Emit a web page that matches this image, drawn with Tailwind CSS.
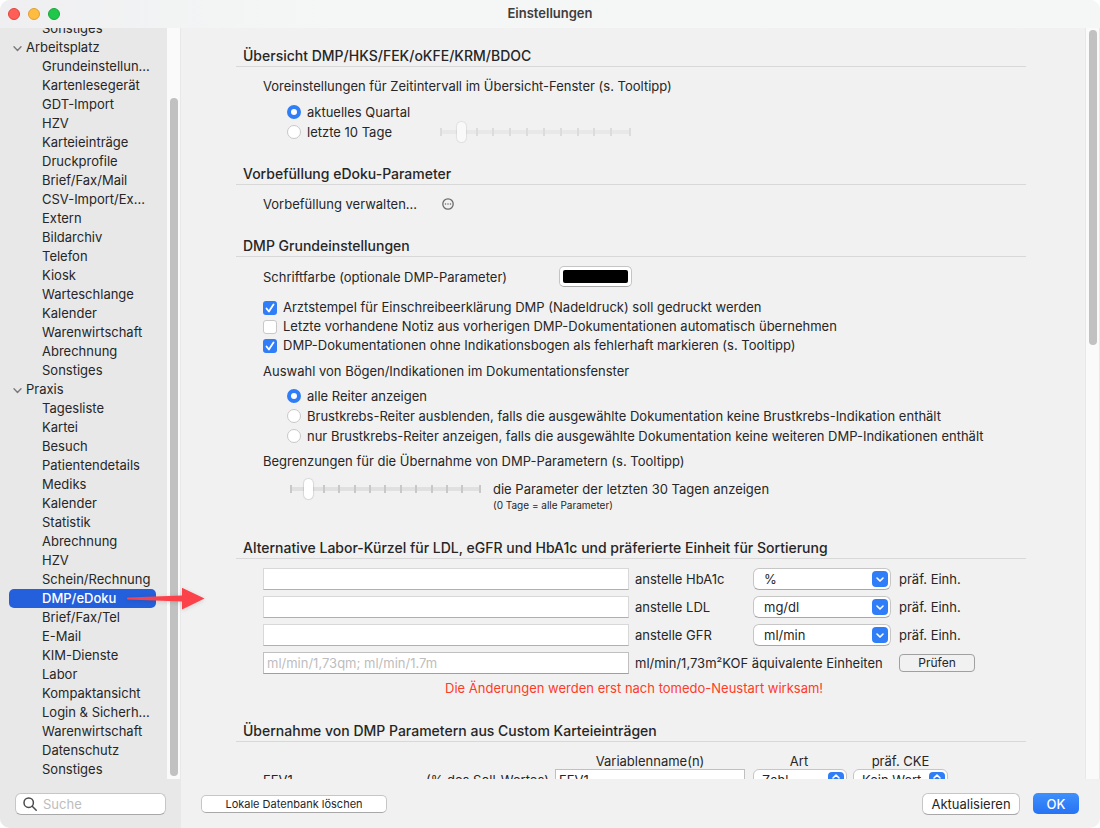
<!DOCTYPE html>
<html lang="de">

<head>
  <meta charset="UTF-8">
  <title>Einstellungen</title>
  <meta name="viewport" content="width=device-width, initial-scale=1.0">
  <script src="https://cdn.jsdelivr.net/npm/@tailwindcss/browser@4"></script>
</head>

<body class="bg-white h-screen font-[Inter,sans-serif] text-[13px] leading-5 text-[#262626]">
  <div class="h-full flex flex-col rounded-[10px] overflow-hidden bg-[#f1f1f1]">

    <!-- Title Bar -->
    <header class="relative h-7 shrink-0 flex items-center px-2 gap-2 bg-linear-to-r from-[#efeff1] to-[#f5f7f6] to-30%">
      <button aria-label="Schließen" class="size-3 rounded-full bg-[#ff5f57] border border-[#e0443e]"></button>
      <button aria-label="Minimieren" class="size-3 rounded-full bg-[#febc40] border border-[#dfa033]"></button>
      <button aria-label="Maximieren" class="size-3 rounded-full bg-[#1fc74b] border border-[#18a838]"></button>
      <h1 class="absolute inset-x-0 top-1 leading-[19px] text-center font-semibold text-[#3d3d3d] pointer-events-none">Einstellungen</h1>
    </header>

    <div class="flex-1 min-h-0 flex">
      <!-- Sidebar -->
      <aside class="w-[181px] shrink-0 flex flex-col bg-[#e8e8e8]">
        <div class="flex-1 min-h-0 flex">
          <nav class="flex-1 min-w-0 flex flex-col justify-end overflow-y-clip leading-[19px]">
            <ul class="pl-[42px]">
              <li><a href="#">Sonstiges</a></li>
            </ul>
            <h2 class="flex items-center gap-1 pl-[13px]">
              <svg class="size-[9px] mt-px" viewBox="0 0 9 9" fill="none" stroke="#7a7a7a" stroke-width="1.4" stroke-linecap="round" stroke-linejoin="round"><path d="M1 2.8 4.5 6.4 8 2.8" /></svg>
              Arbeitsplatz
            </h2>
            <ul class="pl-[42px]">
              <li><a href="#">Grundeinstellun...</a></li>
              <li><a href="#">Kartenlesegerät</a></li>
              <li><a href="#">GDT-Import</a></li>
              <li><a href="#">HZV</a></li>
              <li><a href="#">Karteieinträge</a></li>
              <li><a href="#">Druckprofile</a></li>
              <li><a href="#">Brief/Fax/Mail</a></li>
              <li><a href="#">CSV-Import/Ex...</a></li>
              <li><a href="#">Extern</a></li>
              <li><a href="#">Bildarchiv</a></li>
              <li><a href="#">Telefon</a></li>
              <li><a href="#">Kiosk</a></li>
              <li><a href="#">Warteschlange</a></li>
              <li><a href="#">Kalender</a></li>
              <li><a href="#">Warenwirtschaft</a></li>
              <li><a href="#">Abrechnung</a></li>
              <li><a href="#">Sonstiges</a></li>
            </ul>
            <h2 class="flex items-center gap-1 pl-[13px]">
              <svg class="size-[9px] mt-px" viewBox="0 0 9 9" fill="none" stroke="#7a7a7a" stroke-width="1.4" stroke-linecap="round" stroke-linejoin="round"><path d="M1 2.8 4.5 6.4 8 2.8" /></svg>
              Praxis
            </h2>
            <ul class="pl-[42px]">
              <li><a href="#">Tagesliste</a></li>
              <li><a href="#">Kartei</a></li>
              <li><a href="#">Besuch</a></li>
              <li><a href="#">Patientendetails</a></li>
              <li><a href="#">Mediks</a></li>
              <li><a href="#">Kalender</a></li>
              <li><a href="#">Statistik</a></li>
              <li><a href="#">Abrechnung</a></li>
              <li><a href="#">HZV</a></li>
              <li><a href="#">Schein/Rechnung</a></li>
              <li class="relative">
                <a href="#" aria-current="page" class="block -ml-[33px] mr-[11px] pl-[33px] rounded-[5px] bg-[#2560dc] text-white font-medium">DMP/eDoku</a>
                <svg class="absolute z-10 left-[85px] top-0 w-[78px] h-[19px] overflow-visible drop-shadow-sm" viewBox="0 0 78 19" fill="#fb4149"><path d="M.5 8.5 55 6.6V-1.2L77.5 9.5 55 20.5V12.6L.5 10.5Q-.6 9.5.5 8.5Z" /></svg>
              </li>
              <li><a href="#">Brief/Fax/Tel</a></li>
              <li><a href="#">E-Mail</a></li>
              <li><a href="#">KIM-Dienste</a></li>
              <li><a href="#">Labor</a></li>
              <li><a href="#">Kompaktansicht</a></li>
              <li><a href="#">Login &amp; Sicherh...</a></li>
              <li><a href="#">Warenwirtschaft</a></li>
              <li><a href="#">Datenschutz</a></li>
              <li><a href="#">Sonstiges</a></li>
            </ul>
          </nav>
          <div class="w-3.5 flex flex-col justify-end px-[3px] pb-[3px] bg-[#fafafa] border-r border-[#e8e8e8]">
            <div class="h-[90.6%] w-2 rounded-full bg-[#c1c1c1]"></div>
          </div>
        </div>
        <div class="h-[49px] shrink-0 flex items-center px-[15px]">
          <label class="w-full h-[22px] flex items-center gap-1.5 px-[7px] rounded-md bg-white border border-[#c6c6c6] border-b-[#a8a8a8]">
            <svg class="size-3.5 shrink-0" viewBox="0 0 14 14" fill="none" stroke="#4a4a4a" stroke-width="1.5" stroke-linecap="round"><circle cx="5.7" cy="5.7" r="4.7" /><path d="m9.2 9.2 4 4" /></svg>
            <input type="search" aria-label="Suche" placeholder="Suche" class="min-w-0 flex-1 outline-none placeholder:text-[#bdbdbd]">
          </label>
        </div>
      </aside>

      <main class="flex-1 min-w-0 flex flex-col">
        <div class="flex-1 min-h-0 flex">
          <div class="flex-1 min-w-0 overflow-hidden pt-[18px] pl-[55px] pr-[59px] flex flex-col gap-[22px]">

            <!-- Übersicht -->
            <section>
              <h2 class="pl-[7px] text-sm leading-5 font-medium border-b border-[#d8d8d8]">Übersicht DMP/HKS/FEK/oKFE/KRM/BDOC</h2>
              <div class="pl-[27px] pt-[9px]">
                <p>Voreinstellungen für Zeitintervall im Übersicht-Fenster (s. Tooltipp)</p>
                <div class="pl-6 pt-1.5">
                  <label class="flex items-center gap-1.5 h-5">
                    <input type="radio" name="intervall" checked class="appearance-none size-3.5 shrink-0 rounded-full bg-white border border-[#c8c8c8] checked:border-4 checked:border-[#2f7ef8]">
                    aktuelles Quartal
                  </label>
                  <div class="flex items-center h-5">
                    <label class="flex items-center gap-1.5 w-[153px]">
                      <input type="radio" name="intervall" class="appearance-none size-3.5 shrink-0 rounded-full bg-white border border-[#c8c8c8] checked:border-4 checked:border-[#2f7ef8]">
                      letzte 10 Tage
                    </label>
                    <div class="grid items-center w-[191px]">
                      <svg class="col-start-1 row-start-1 w-full h-2" viewBox="0 0 191 8"><path fill="#e8e8e8" d="M0 2h191v4H0z" /><path stroke="#dcdcdc" stroke-width="2" d="M1 0v8M37 0v8M53 0v8M70 0v8M87 0v8M104 0v8M121 0v8M138 0v8M154 0v8M171 0v8M190 0v8" /></svg>
                      <input type="range" min="0" max="11" value="1" disabled aria-label="Tage" class="col-start-1 row-start-1 appearance-none w-full h-5 bg-transparent [&::-webkit-slider-thumb]:appearance-none [&::-webkit-slider-thumb]:w-[9px] [&::-webkit-slider-thumb]:h-5 [&::-webkit-slider-thumb]:rounded-full [&::-webkit-slider-thumb]:bg-[#f9f9f9] [&::-webkit-slider-thumb]:shadow-[0_0_1px_1px_#00000012]">
                    </div>
                  </div>
                </div>
              </div>
            </section>

            <!-- Vorbefüllung -->
            <section>
              <h2 class="pl-[7px] text-sm leading-5 font-medium border-b border-[#d8d8d8]">Vorbefüllung eDoku-Parameter</h2>
              <div class="pl-[27px] pt-[9px] flex items-center">
                <span class="w-[179px]">Vorbefüllung verwalten...</span>
                <button aria-label="Vorbefüllung verwalten">
                  <svg class="size-3" viewBox="0 0 12 12" fill="none" stroke="#6a6a6a" stroke-width="1.3"><circle cx="6" cy="6" r="5.2" /><path stroke-width="1.5" stroke-linecap="round" d="M3.5 6h.01M6 6h.01M8.5 6h.01" /></svg>
                </button>
              </div>
            </section>

            <!-- DMP Grundeinstellungen -->
            <section>
              <h2 class="pl-[7px] text-sm leading-5 font-medium border-b border-[#d8d8d8]">DMP Grundeinstellungen</h2>
              <div class="pl-[27px] pt-[9px]">
                <div class="flex items-center h-[21px]">
                  <label for="farbe" class="w-[296px]">Schriftfarbe (optionale DMP-Parameter)</label>
                  <button id="farbe" class="w-[73px] h-[21px] p-[3px] rounded-[5px] bg-white border border-[#c4c4c4] border-b-[#a8a8a8]"><span class="block h-full rounded-xs bg-black"></span></button>
                </div>
                <div class="pt-[11px] leading-[19px]">
                  <label class="flex items-center gap-1.5">
                    <span class="grid size-3.5 shrink-0">
                      <input type="checkbox" checked class="peer col-start-1 row-start-1 appearance-none size-3.5 rounded-[3px] bg-white border border-[#c8c8c8] checked:border-0 checked:bg-[#2f7ef8]">
                      <svg class="col-start-1 row-start-1 size-3.5 pointer-events-none hidden peer-checked:block" viewBox="0 0 14 14" fill="none" stroke="#fff" stroke-width="1.8" stroke-linecap="round" stroke-linejoin="round"><path d="m3.5 7.5 2.4 3L10.5 3.5" /></svg>
                    </span>
                    Arztstempel für Einschreibeerklärung DMP (Nadeldruck) soll gedruckt werden
                  </label>
                  <label class="flex items-center gap-1.5">
                    <input type="checkbox" class="appearance-none size-3.5 shrink-0 rounded-[3px] bg-white border border-[#c8c8c8]">
                    Letzte vorhandene Notiz aus vorherigen DMP-Dokumentationen automatisch übernehmen
                  </label>
                  <label class="flex items-center gap-1.5">
                    <span class="grid size-3.5 shrink-0">
                      <input type="checkbox" checked class="peer col-start-1 row-start-1 appearance-none size-3.5 rounded-[3px] bg-white border border-[#c8c8c8] checked:border-0 checked:bg-[#2f7ef8]">
                      <svg class="col-start-1 row-start-1 size-3.5 pointer-events-none hidden peer-checked:block" viewBox="0 0 14 14" fill="none" stroke="#fff" stroke-width="1.8" stroke-linecap="round" stroke-linejoin="round"><path d="m3.5 7.5 2.4 3L10.5 3.5" /></svg>
                    </span>
                    DMP-Dokumentationen ohne Indikationsbogen als fehlerhaft markieren (s. Tooltipp)
                  </label>
                </div>
                <p class="pt-1.5">Auswahl von Bögen/Indikationen im Dokumentationsfenster</p>
                <div class="pl-6 pt-[5px]">
                  <label class="flex items-center gap-1.5 h-5">
                    <input type="radio" name="reiter" checked class="appearance-none size-3.5 shrink-0 rounded-full bg-white border border-[#c8c8c8] checked:border-4 checked:border-[#2f7ef8]">
                    alle Reiter anzeigen
                  </label>
                  <label class="flex items-center gap-1.5 h-5">
                    <input type="radio" name="reiter" class="appearance-none size-3.5 shrink-0 rounded-full bg-white border border-[#c8c8c8] checked:border-4 checked:border-[#2f7ef8]">
                    Brustkrebs-Reiter ausblenden, falls die ausgewählte Dokumentation keine Brustkrebs-Indikation enthält
                  </label>
                  <label class="flex items-center gap-1.5 h-5">
                    <input type="radio" name="reiter" class="appearance-none size-3.5 shrink-0 rounded-full bg-white border border-[#c8c8c8] checked:border-4 checked:border-[#2f7ef8]">
                    nur Brustkrebs-Reiter anzeigen, falls die ausgewählte Dokumentation keine weiteren DMP-Indikationen enthält
                  </label>
                </div>
                <p class="pt-[5px]">Begrenzungen für die Übernahme von DMP-Parametern (s. Tooltipp)</p>
                <div class="pl-[27px] pt-2 flex items-start gap-3">
                  <div class="grid items-center w-[191px] h-[19px]">
                    <svg class="col-start-1 row-start-1 w-full h-2" viewBox="0 0 191 8"><path fill="#e0e0e0" d="M0 2h191v4H0z" /><path stroke="#c8c8c8" stroke-width="2" d="M1 0v8M34 0v8M49 0v8M65 0v8M80 0v8M95 0v8M111 0v8M126 0v8M142 0v8M157 0v8M172 0v8M190 0v8" /></svg>
                    <input id="tage" type="range" min="0" max="13" value="1" class="col-start-1 row-start-1 appearance-none w-full h-5 bg-transparent [&::-webkit-slider-thumb]:appearance-none [&::-webkit-slider-thumb]:w-[9px] [&::-webkit-slider-thumb]:h-5 [&::-webkit-slider-thumb]:rounded-full [&::-webkit-slider-thumb]:bg-white [&::-webkit-slider-thumb]:shadow-[0_0_1px_1px_#0000001c]">
                  </div>
                  <label for="tage">
                    die Parameter der letzten 30 Tagen anzeigen
                    <small class="block text-[10px] leading-3">(0 Tage = alle Parameter)</small>
                  </label>
                </div>
              </div>
            </section>

            <!-- Labor-Kürzel -->
            <section class="pt-[5px]">
              <h2 class="pl-[7px] text-sm leading-5 font-medium border-b border-[#d8d8d8]">Alternative Labor-Kürzel für LDL, eGFR und HbA1c und präferierte Einheit für Sortierung</h2>
              <div class="pl-[27px] pt-[9px]">
                <div class="grid grid-cols-[minmax(0,366px)_112px_138px_auto] gap-x-1.5 gap-y-1.5 items-center">
                  <input id="hba1c" type="text" class="h-[22px] px-1 bg-white border border-[#d8d8d8] border-b-[#b0b0b0]">
                  <label for="hba1c">anstelle HbA1c</label>
                  <div class="grid items-center">
                    <select id="einh-hba1c" class="col-start-1 row-start-1 appearance-none h-[22px] pl-2.5 rounded-md bg-white border border-[#c6c6c6] border-b-[#a8a8a8]"><option>%</option></select>
                    <svg class="col-start-1 row-start-1 justify-self-end mr-[3px] size-4 pointer-events-none" viewBox="0 0 16 16"><rect width="16" height="16" rx="4" fill="#2f7ef8" /><path fill="none" stroke="#fff" stroke-width="1.6" stroke-linecap="round" stroke-linejoin="round" d="m5 7 3 3 3-3" /></svg>
                  </div>
                  <label for="einh-hba1c" class="pl-0.5">präf. Einh.</label>

                  <input id="ldl" type="text" class="h-[22px] px-1 bg-white border border-[#d8d8d8] border-b-[#b0b0b0]">
                  <label for="ldl">anstelle LDL</label>
                  <div class="grid items-center">
                    <select id="einh-ldl" class="col-start-1 row-start-1 appearance-none h-[22px] pl-2.5 rounded-md bg-white border border-[#c6c6c6] border-b-[#a8a8a8]"><option>mg/dl</option></select>
                    <svg class="col-start-1 row-start-1 justify-self-end mr-[3px] size-4 pointer-events-none" viewBox="0 0 16 16"><rect width="16" height="16" rx="4" fill="#2f7ef8" /><path fill="none" stroke="#fff" stroke-width="1.6" stroke-linecap="round" stroke-linejoin="round" d="m5 7 3 3 3-3" /></svg>
                  </div>
                  <label for="einh-ldl" class="pl-0.5">präf. Einh.</label>

                  <input id="gfr" type="text" class="h-[22px] px-1 bg-white border border-[#d8d8d8] border-b-[#b0b0b0]">
                  <label for="gfr">anstelle GFR</label>
                  <div class="grid items-center">
                    <select id="einh-gfr" class="col-start-1 row-start-1 appearance-none h-[22px] pl-2.5 rounded-md bg-white border border-[#c6c6c6] border-b-[#a8a8a8]"><option>ml/min</option></select>
                    <svg class="col-start-1 row-start-1 justify-self-end mr-[3px] size-4 pointer-events-none" viewBox="0 0 16 16"><rect width="16" height="16" rx="4" fill="#2f7ef8" /><path fill="none" stroke="#fff" stroke-width="1.6" stroke-linecap="round" stroke-linejoin="round" d="m5 7 3 3 3-3" /></svg>
                  </div>
                  <label for="einh-gfr" class="pl-0.5">präf. Einh.</label>

                  <input id="kof" type="text" placeholder="ml/min/1,73qm; ml/min/1.7m" class="h-[22px] px-[3px] bg-white border border-[#c0c0c0] border-b-[#a0a0a0] placeholder:text-[#bdbdbd]">
                  <label for="kof" class="col-span-2 whitespace-nowrap">ml/min/1,73m²KOF äquivalente Einheiten</label>
                  <div class="pl-0.5 flex">
                    <button class="w-[76px] h-[18px] rounded-[4px] border border-[#a0a0a0] text-xs leading-4">Prüfen</button>
                  </div>
                </div>
                <p class="pt-1 pl-[182px] text-[#ff3b26]">Die Änderungen werden erst nach tomedo-Neustart wirksam!</p>
              </div>
            </section>

            <!-- Custom Karteieinträge -->
            <section class="pt-px">
              <h2 class="pl-[7px] text-sm leading-5 font-medium border-b border-[#d8d8d8]">Übernahme von DMP Parametern aus Custom Karteieinträgen</h2>
              <div class="pl-[27px] pt-[9px] grid grid-cols-[155px_125px_190px_96px_95px] gap-x-1.5 items-center">
                <span class="col-start-3 h-[18px] text-center">Variablenname(n)</span>
                <span class="h-[18px] text-center">Art</span>
                <span class="h-[18px] text-center">präf. CKE</span>
                <label for="fev1">FEV1</label>
                <span class="text-right whitespace-nowrap">(% des Soll-Wertes)</span>
                <input id="fev1" type="text" value="FEV1" class="h-[22px] px-[3px] bg-white border border-[#c0c0c0] border-b-[#a0a0a0]">
                <div class="grid items-center pl-0.5">
                  <select aria-label="Art" class="col-start-1 row-start-1 appearance-none h-[22px] pl-2 rounded-md bg-white border border-[#c6c6c6]"><option>Zahl</option></select>
                  <svg class="col-start-1 row-start-1 justify-self-end mr-[3px] size-4 pointer-events-none" viewBox="0 0 16 16"><rect width="16" height="16" rx="4" fill="#2f7ef8" /><path fill="none" stroke="#fff" stroke-width="1.6" stroke-linecap="round" stroke-linejoin="round" d="m5 6 3-3 3 3M5 10l3 3 3-3" /></svg>
                </div>
                <div class="grid items-center">
                  <select aria-label="präf. CKE" class="col-start-1 row-start-1 appearance-none h-[22px] pl-2 rounded-md bg-white border border-[#c6c6c6]"><option>Kein Wert</option></select>
                  <svg class="col-start-1 row-start-1 justify-self-end mr-[3px] size-4 pointer-events-none" viewBox="0 0 16 16"><rect width="16" height="16" rx="4" fill="#2f7ef8" /><path fill="none" stroke="#fff" stroke-width="1.6" stroke-linecap="round" stroke-linejoin="round" d="m5 6 3-3 3 3M5 10l3 3 3-3" /></svg>
                </div>
              </div>
            </section>
          </div>

          <div class="w-[15px] shrink-0 pt-0.5 pl-[3px] bg-[#fafafa] border-x border-[#e8e8e8]">
            <div class="h-[42%] w-2 rounded-full bg-[#c1c1c1]"></div>
          </div>
        </div>

        <!-- Footer -->
        <footer class="h-[49px] shrink-0 flex items-center pl-5 pr-[21px]">
          <button class="w-[186px] h-[18px] rounded-[5px] bg-white border border-[#c6c6c6] border-b-[#a8a8a8] text-[11px] leading-4">Lokale Datenbank löschen</button>
          <button class="ml-auto w-[98px] h-[22px] rounded-md bg-white border border-[#c6c6c6] border-b-[#a8a8a8]">Aktualisieren</button>
          <button class="ml-[13px] w-[46px] h-[21px] rounded-[5px] bg-linear-to-b from-[#3f8ffb] to-[#2673f5] text-white font-medium">OK</button>
        </footer>
      </main>
    </div>
  </div>
</body>

</html>
